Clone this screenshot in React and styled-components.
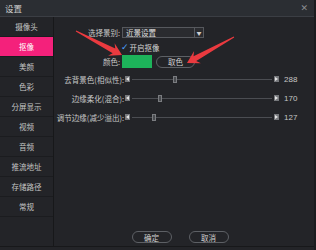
import styled, { createGlobalStyle } from "styled-components";

const Global = createGlobalStyle`
    html, body { margin:0; padding:0; background:#232428; }
    * { box-sizing:border-box; }
`

const Window = styled.div`
    position:relative;
    width:316px;
    height:250px;
    background:#232428;
    display:flex;
    flex-direction:column;
    overflow:hidden;
    font-family:"Noto Sans CJK SC", "Noto Sans", sans-serif;
    color:#c6c6c6;
    border-right:2px solid #1b1c1f;
`
const TitleBar = styled.div`
    height:17px;
    flex:none;
    background:#2b2e33;
    border-bottom:1px solid #3b3e44;
    display:flex;
    align-items:center;
    justify-content:space-between;
    padding:0 6px 0 5px;
    font-size:8.5px;
    color:#cfcfcf;
`
const Close = styled.span`
    font-family:"DejaVu Sans", sans-serif;
    font-size:9px;
    color:#8a8c90;
`
const Body = styled.div`
    flex:1;
    display:flex;
    border-bottom:1px solid #17181a;
    margin-bottom:3px;
`
const Sidebar = styled.div`
    width:54px;
    flex:none;
    border-right:1px solid #17181a;
    display:flex;
    flex-direction:column;
`
const NavItem = styled.div`
    height:20px;
    flex:none;
    border-bottom:1px solid #1b1c1f;
    display:flex;
    align-items:center;
    justify-content:center;
    font-size:7.5px;
    background:${p => (p.$active ? "#f4217b" : "transparent")};
    color:${p => (p.$active ? "#ffffff" : "#c4c4c4")};
`
const Panel = styled.div`
    flex:1;
    display:flex;
    flex-direction:column;
    padding:10px 0 3px 0;
`
const FormRow = styled.div`
    display:flex;
    align-items:center;
    height:${p => p.$h}px;
    margin-top:${p => p.$mt || 0}px;
`
const Label = styled.div`
    width:${p => p.$w}px;
    flex:none;
    text-align:right;
    font-size:7.5px;
    padding-right:1px;
    white-space:nowrap;
`
const Select = styled.div`
    width:82px;
    height:11px;
    margin-left:1px;
    display:flex;
    background:#2a2b2f;
    border:1px solid #56585d;
    font-size:7.5px;
    color:#e0e0e0;
`
const SelectText = styled.div`
    flex:1;
    padding-left:3px;
    line-height:9px;
`
const SelectArrow = styled.div`
    width:9px;
    border-left:1px solid #56585d;
    display:flex;
    align-items:center;
    justify-content:center;
    font-size:5px;
    color:#cfcfcf;
`
const Check = styled.span`
    font-family:"DejaVu Sans", sans-serif;
    font-weight:bold;
    color:#4ea3ff;
    font-size:9px;
    margin:0 1px 0 0;
`
const CheckText = styled.span`
    font-size:7.5px;
    color:#d4d4d4;
`
const Swatch = styled.div`
    width:30px;
    height:13px;
    margin-left:1px;
    background:#1db35a;
`
const PillButton = styled.div`
    width:${p => p.$w || 39}px;
    height:${p => p.$h || 12}px;
    margin-left:${p => p.$ml || 0}px;
    border:1px solid #5d6065;
    border-radius:7px;
    display:flex;
    align-items:center;
    justify-content:center;
    font-size:7.5px;
    color:#d0d0d0;
`
const SliderRow = styled.div`
    display:flex;
    align-items:center;
    height:10px;
    margin-top:${p => p.$mt}px;
    padding-right:16px;
`
const StepBtn = styled.div`
    width:5px;
    height:6px;
    flex:none;
    background:#76787c;
    display:flex;
    align-items:center;
    justify-content:center;
    margin:0 ${p => (p.$right ? "0 0 1px" : "1px 0 0")};
`
const Track = styled.div`
    position:relative;
    flex:1;
    height:7px;
    margin:0 1px;
    &::before {
        content:"";
        position:absolute;
        left:0;
        right:0;
        top:3px;
        height:1px;
        background:#4b4d52;
    }
`
const Thumb = styled.div`
    position:absolute;
    top:0;
    width:4px;
    height:7px;
    background:#4a4c50;
    border:1px solid #7a7c80;
`
const Value = styled.div`
    margin-left:5px;
    width:14px;
    font-family:"Liberation Sans", sans-serif;
    font-size:8px;
    color:#c6c6c6;
`
const Footer = styled.div`
    margin-top:auto;
    display:flex;
    justify-content:center;
    gap:17px;
    padding-right:8px;
`
const Overlay = styled.svg`
    position:absolute;
    left:0;
    top:0;
    pointer-events:none;
`

const navItems = ["摄像头", "抠像", "美颜", "色彩", "分屏显示", "视频", "音频", "推流地址", "存储路径", "常规"]

const sliders = [
    { label: "去背景色(相似性):", value: 288, pos: 41, mt: 6 },
    { label: "边缘柔化(混合):", value: 170, pos: 26, mt: 9 },
    { label: "调节边缘(减少溢出):", value: 127, pos: 20, mt: 9 },
]

const arrowPoints = (x1, y1, x2, y2) => {
    const dx = x2 - x1, dy = y2 - y1
    const len = Math.hypot(dx, dy)
    const ux = dx / len, uy = dy / len
    const nx = -uy, ny = ux
    const headLen = 12, headW = 7, neckW = 2.8, tailW = 0.4
    const bx = x2 - ux * headLen, by = y2 - uy * headLen
    const nbx = x2 - ux * (headLen - 3), nby = y2 - uy * (headLen - 3)
    const pts = [
        [x1 + nx * tailW, y1 + ny * tailW],
        [nbx + nx * neckW, nby + ny * neckW],
        [bx + nx * headW, by + ny * headW],
        [x2, y2],
        [bx - nx * headW, by - ny * headW],
        [nbx - nx * neckW, nby - ny * neckW],
        [x1 - nx * tailW, y1 - ny * tailW],
    ]
    return pts.map(p => p.map(v => v.toFixed(1)).join(",")).join(" ")
}

const App = () => {
    return (
        <Window>
            <Global />
            <TitleBar>
                设置
                <Close>✕</Close>
            </TitleBar>
            <Body>
                <Sidebar>
                    {navItems.map(item =>
                        <NavItem key={item} $active={item === "抠像"}>{item}</NavItem>
                    )}
                </Sidebar>
                <Panel>
                    <FormRow $h={11}>
                        <Label $w={67}>选择景别:</Label>
                        <Select>
                            <SelectText>近景设置</SelectText>
                            <SelectArrow>▼</SelectArrow>
                        </Select>
                    </FormRow>
                    <FormRow $h={10} $mt={4}>
                        <Label $w={67} />
                        <Check>✓</Check>
                        <CheckText>开启抠像</CheckText>
                    </FormRow>
                    <FormRow $h={13} $mt={3}>
                        <Label $w={67}>颜色:</Label>
                        <Swatch />
                        <PillButton $ml={4}>取色</PillButton>
                    </FormRow>
                    {sliders.map(s =>
                        <SliderRow key={s.label} $mt={s.mt}>
                            <Label $w={71}>{s.label}</Label>
                            <StepBtn>
                                <svg width="3" height="4" viewBox="0 0 3 4"><path d="M3 0 L0 2 L3 4 Z" fill="#e4e4e4" /></svg>
                            </StepBtn>
                            <Track>
                                <Thumb style={{ left: s.pos }} />
                            </Track>
                            <StepBtn $right>
                                <svg width="3" height="4" viewBox="0 0 3 4"><path d="M0 0 L3 2 L0 4 Z" fill="#e4e4e4" /></svg>
                            </StepBtn>
                            <Value>{s.value}</Value>
                        </SliderRow>
                    )}
                    <Footer>
                        <PillButton $w={40}>确定</PillButton>
                        <PillButton $w={40}>取消</PillButton>
                    </Footer>
                </Panel>
            </Body>
            <Overlay width="316" height="250" viewBox="0 0 316 250">
                <polygon points={arrowPoints(76, 31, 122, 55)} fill="#ea3a3f" />
                <polygon points={arrowPoints(234, 37, 187, 63)} fill="#ea3a3f" />
            </Overlay>
        </Window>
    )
}
export default App
